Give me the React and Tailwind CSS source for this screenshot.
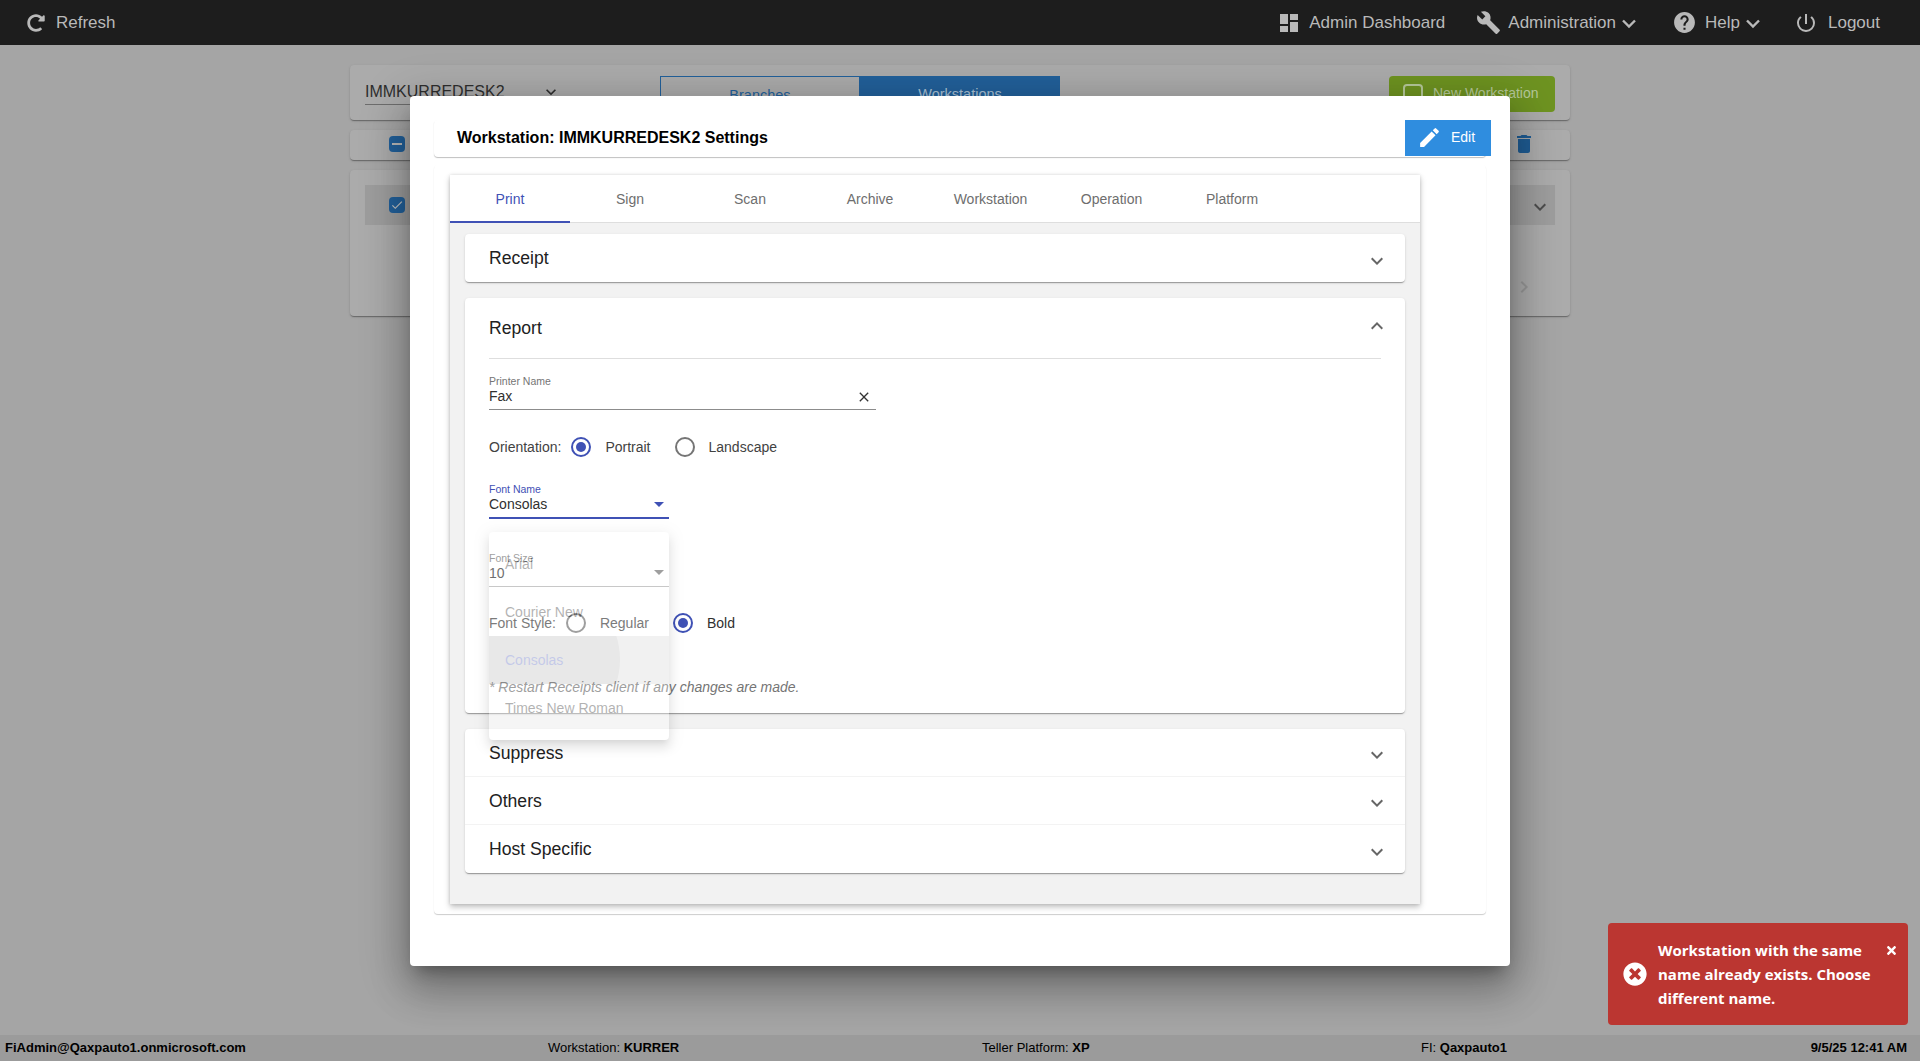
import React from "react";
import { MdDashboard, MdBuild, MdHelp, MdPowerSettingsNew, MdEdit, MdDelete, MdKeyboardArrowDown, MdKeyboardArrowUp, MdKeyboardArrowRight, MdClose, MdArrowDropDown, MdCheck } from "react-icons/md";
import { FaTimes, FaTimesCircle, FaRedoAlt } from "react-icons/fa";

const card1 = "shadow-[0_2px_1px_-1px_rgba(0,0,0,.2),0_1px_1px_0_rgba(0,0,0,.14),0_1px_3px_0_rgba(0,0,0,.12)]";

function Radio({ on }) {
  return (
    <span className={"flex h-5 w-5 shrink-0 items-center justify-center rounded-full border-2 " + (on ? "border-[#3f51b5]" : "border-[#757575]")}>
      {on && <span className="h-2.5 w-2.5 rounded-full bg-[#3f51b5]" />}
    </span>
  );
}

function RowHead({ label, border }) {
  return (
    <div className={"flex h-12 items-center justify-between pl-6 pr-4 " + (border ? "border-b border-[#f3f3f3]" : "")}>
      <span className="pt-[1px] text-[17.6px] text-[#212121]">{label}</span>
      <MdKeyboardArrowDown className="mt-[5px] text-[24px] text-[#666]" />
    </div>
  );
}

function Chevron() {
  return (
    <svg viewBox="0 0 20 20" className="ml-[3px] h-5 w-5" fill="none" stroke="currentColor" strokeWidth="2.4">
      <path d="M4 7.5l6 6 6-6" />
    </svg>
  );
}

function TopItem({ icon, label, chevron, cls }) {
  return (
    <div className={"flex items-center text-[#b9b9b9] " + cls}>
      {icon}
      <span className="text-[17px]">{label}</span>
      {chevron && <Chevron />}
    </div>
  );
}

const tabs = [
  ["Print", "w-[120px]"],
  ["Sign", "w-[120px]"],
  ["Scan", "w-[120px]"],
  ["Archive", "w-[120px]"],
  ["Workstation", "w-[121px]"],
  ["Operation", "w-[121px]"],
  ["Platform", "w-[120px]"],
];

export default function App() {
  return (
    <div className="relative flex h-screen flex-col overflow-hidden bg-[#a5a5a5] font-['Liberation_Sans',sans-serif]">
      <header className="flex h-[45px] shrink-0 items-center justify-between bg-[#1d1d1d] pl-[27px] pr-[40px]">
        <div className="flex items-center text-[#b9b9b9]">
          <FaRedoAlt className="mr-[11px] text-[18px]" />
          <span className="text-[17px]">Refresh</span>
        </div>
        <div className="flex items-center">
          <TopItem cls="mr-[31px]" icon={<MdDashboard className="mr-[8px] text-[24px]" />} label="Admin Dashboard" />
          <TopItem cls="mr-[33px]" icon={<MdBuild className="mr-[7px] text-[25px]" />} label="Administration" chevron />
          <TopItem cls="mr-[31px]" icon={<MdHelp className="mr-[8px] text-[25px]" />} label="Help" chevron />
          <TopItem icon={<MdPowerSettingsNew className="mr-[10px] text-[24px]" />} label="Logout" />
        </div>
      </header>

      <main className="mx-auto flex w-[1220px] flex-1 flex-col pt-[20px]">
        <section className={"flex h-[55px] items-start rounded bg-[#ababab] px-[15px] pt-[11px] " + card1}>
          <div className="flex h-[29px] w-[200px] items-start justify-between border-b border-[#6d6d6d] pt-[4px] text-[16px] text-[#2e2e2e]">
            <span>IMMKURREDESK2</span>
            <MdKeyboardArrowDown className="mt-[2px] mr-[4px] text-[20px]" />
          </div>
          <div className="mr-auto ml-[95px] flex h-[36px] w-[400px] text-[14.5px]">
            <div className="flex w-[200px] justify-center border border-[#22609a] pt-[8px] text-[#22609a]">Branches</div>
            <div className="flex w-[200px] justify-center bg-[#22609a] pt-[8px] text-[#a9c0d5]">Workstations</div>
          </div>
          <div className="flex h-[36px] w-[166px] items-center rounded-sm bg-[#6e9321] pb-[1px] pl-[14px] text-[14px] text-[#b6c99a]">
            <span className="mr-[10px] h-[20px] w-[20px] rounded-sm border-2 border-[#b6c99a]" />
            New Workstation
          </div>
        </section>

        <section className={"mt-[10px] flex h-[30px] items-center justify-between rounded bg-[#ababab] pb-[2px] pl-[39px] pr-[34px] " + card1}>
          <span className="flex h-4 w-4 items-center justify-center rounded-sm bg-[#22609a]">
            <span className="h-[2px] w-[10px] bg-[#b9b9b9]" />
          </span>
          <MdDelete className="text-[24px] text-[#1f5c93]" />
        </section>

        <section className={"mt-[10px] h-[146px] rounded bg-[#ababab] px-[15px] pt-[15px] " + card1}>
          <div className="flex h-[40px] items-center justify-between bg-[#9d9d9d] pl-[24px] pr-[3px]">
            <span className="flex h-4 w-4 items-center justify-center rounded-sm bg-[#22609a]">
              <MdCheck className="text-[14px] text-[#c2c2c2]" />
            </span>
            <MdKeyboardArrowDown className="mt-[4px] text-[24px] text-[#4d4d4d]" />
          </div>
          <div className="mt-[50px] flex justify-end pr-[19px]">
            <MdKeyboardArrowRight className="text-[24px] text-[#969696]" />
          </div>
        </section>
      </main>

      <footer className="flex h-[26px] shrink-0 items-center bg-[#9b9b9b] text-[13px] text-black">
        <div className="w-[548px] pl-[5px] font-bold">FiAdmin@Qaxpauto1.onmicrosoft.com</div>
        <div className="w-[434px]">Workstation: <b>KURRER</b></div>
        <div className="w-[439px]">Teller Platform: <b>XP</b></div>
        <div className="flex-1">FI: <b>Qaxpauto1</b></div>
        <div className="pr-[13px] font-bold">9/5/25 12:41 AM</div>
      </footer>

      {/* Modal dialog over the dimmed page */}
      <div className="absolute inset-x-0 top-[45px] bottom-0 flex justify-center">
        <div className="mt-[51px] h-[870px] w-[1100px] rounded-sm bg-white px-6 pt-6 shadow-[0_11px_15px_-7px_rgba(0,0,0,.3),0_24px_38px_3px_rgba(0,0,0,.2),0_9px_46px_8px_rgba(0,0,0,.18)]">
          <div className="flex h-[37px] items-start justify-between rounded-sm shadow-[0_1px_1px_0_rgba(0,0,0,.25)]">
            <h1 className="pl-[23px] pt-[8px] text-[16px] font-bold leading-[19px] text-black">Workstation: IMMKURREDESK2 Settings</h1>
            <button className="-mr-[5px] flex h-9 w-[86px] items-center bg-[#2f8ddf] pb-[1px] pl-[12px] text-[14px] text-white">
              <MdEdit className="mr-[9px] text-[25px]" />
              Edit
            </button>
          </div>

          <div className="mt-2 h-[749px] rounded-sm pl-4 pt-[10px] shadow-[0_1px_1px_0_rgba(0,0,0,.2)]">
            <div className="h-[729px] w-[970px] bg-[#f2f2f2] shadow-[0_3px_6px_0_rgba(0,0,0,.25),0_0_3px_0_rgba(0,0,0,.12)]">
              <nav className="flex h-[48px] border-b border-[#dedede] bg-white">
                {tabs.map(([t, w], i) => (
                  <div key={t} className={"flex h-[48px] items-center justify-center text-[14px] " + w + " " + (i === 0 ? "border-b-2 border-[#3f51b5] pt-[2px] text-[#3f51b5]" : "text-[#6e6e6e]")}>
                    {t}
                  </div>
                ))}
              </nav>

              <div className="px-[15px] pt-[11px]">
                <div className={"rounded-sm bg-white " + card1}>
                  <RowHead label="Receipt" />
                </div>

                <div className={"relative mt-4 h-[415px] rounded-sm bg-white " + card1}>
                  <div className="mx-6 flex h-[61px] items-center justify-between border-b border-[#dedede]">
                    <span className="pt-[1px] text-[17.6px] text-[#212121]">Report</span>
                    <MdKeyboardArrowUp className="-mt-[5px] -mr-[8px] text-[24px] text-[#666]" />
                  </div>

                  <div className="px-6 pt-[16px] text-[14px] text-[#424242]">
                    <div className="w-[387px] border-b border-[#8c8c8c]">
                      <div className="text-[10.5px] leading-[12px] text-[#757575]">Printer Name</div>
                      <div className="flex h-[22px] items-start justify-between pr-[4px] pt-[1px] leading-[17px]">
                        <span className="text-[#303030]">Fax</span>
                        <MdClose className="mt-[1px] text-[16px] text-[#333]" />
                      </div>
                    </div>

                    <div className="mt-[27px] flex h-5 items-center">
                      <span className="mr-[10px]">Orientation:</span>
                      <Radio on />
                      <span className="ml-[14px]">Portrait</span>
                      <span className="ml-[24px]"><Radio /></span>
                      <span className="ml-[14px]">Landscape</span>
                    </div>

                    <div className="mt-[26px] w-[180px] border-b-2 border-[#3f51b5]">
                      <div className="text-[10.5px] leading-[12px] text-[#3f51b5]">Font Name</div>
                      <div className="flex h-[22px] items-start justify-between pt-[1px] leading-[17px]">
                        <span className="text-[#303030]">Consolas</span>
                        <MdArrowDropDown className="-mt-[4px] -mr-[2px] text-[24px] text-[#3f51b5]" />
                      </div>
                    </div>

                    <div className="mt-[33px] w-[180px] border-b border-[#b0b0b0]">
                      <div className="text-[10.5px] leading-[12px] text-[#757575]">Font Size</div>
                      <div className="flex h-[22px] items-start justify-between pt-[1px] leading-[17px]">
                        <span className="text-[#303030]">10</span>
                        <MdArrowDropDown className="-mt-[5px] -mr-[2px] text-[24px] text-[#757575]" />
                      </div>
                    </div>

                    <div className="mt-[26px] flex h-5 items-center">
                      <span className="mr-[10px]">Font Style:</span>
                      <Radio />
                      <span className="ml-[14px]">Regular</span>
                      <span className="ml-[24px]"><Radio on /></span>
                      <span className="ml-[14px] text-[#303030]">Bold</span>
                    </div>

                    <p className="mt-[44px] italic text-[#757575]">* Restart Receipts client if any changes are made.</p>
                  </div>

                  {/* Open select menu, fading in */}
                  <div className="absolute left-6 top-[234px] z-10 h-[208px] w-[180px] overflow-hidden rounded bg-white py-2 text-[14px] text-black opacity-30 shadow-[0_5px_5px_-3px_rgba(0,0,0,.3),0_8px_10px_1px_rgba(0,0,0,.2),0_3px_14px_2px_rgba(0,0,0,.2)]">
                    <div className="flex h-12 items-center pl-4">Arial</div>
                    <div className="flex h-12 items-center pl-4">Courier New</div>
                    <div className="relative flex h-12 items-center overflow-hidden bg-[#d4d4d4] pl-4 text-[#3f51b5]">
                      <span className="absolute -left-[24px] top-[-54px] h-[155px] w-[155px] rounded-full bg-[#b4b4b4]" />
                      <span className="relative">Consolas</span>
                    </div>
                    <div className="flex h-12 items-center pl-4">Times New Roman</div>
                  </div>
                </div>

                <div className={"mt-4 rounded-sm bg-white " + card1}>
                  <RowHead label="Suppress" border />
                  <RowHead label="Others" border />
                  <RowHead label="Host Specific" />
                </div>
              </div>
            </div>
          </div>
        </div>
      </div>

      {/* Error toast */}
      <div className="absolute bottom-[36px] right-[12px] flex h-[102px] w-[300px] items-center rounded-sm bg-[#bb3631] pl-[15px] font-['Open_Sans',sans-serif] text-[15px] font-bold leading-[24px] text-white">
        <FaTimesCircle className="mr-[11px] shrink-0 text-[24px]" />
        <span className="w-[225px]">Workstation with the same name already exists. Choose different name.</span>
        <FaTimes className="absolute right-[10px] top-[21px] text-[13px]" />
      </div>
    </div>
  );
}
